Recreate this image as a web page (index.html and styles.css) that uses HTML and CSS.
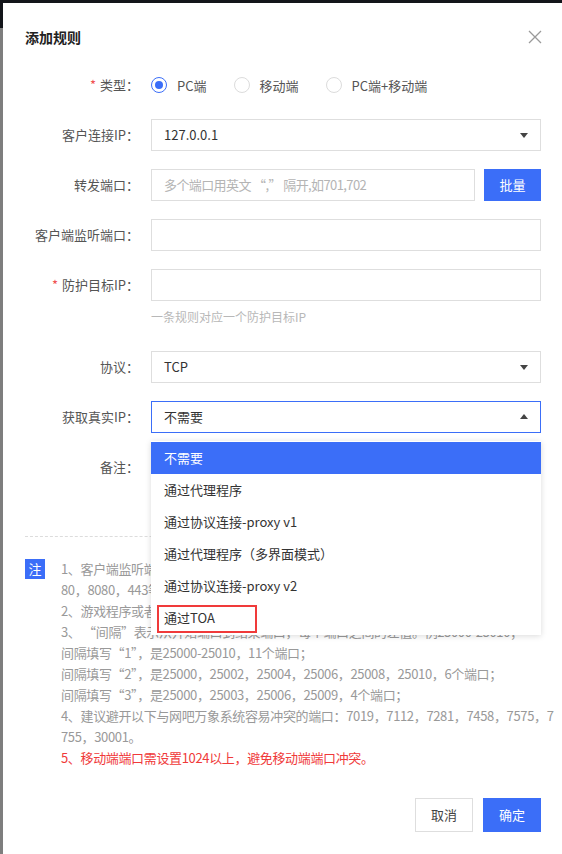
FILE: index.html
```html
<!DOCTYPE html>
<html lang="zh-CN">
<head>
<meta charset="utf-8">
<title>添加规则</title>
<link rel="stylesheet" href="styles.css">
</head>
<body>
<div class="modal">
  <div class="modal-header">
    <div class="modal-title">添加规则</div>
    <svg class="close" width="14" height="14" viewBox="0 0 14 14"><path d="M1 1 L13 13 M13 1 L1 13" stroke="#9a9a9a" stroke-width="1.3" fill="none"/></svg>
  </div>
  <div class="form">
    <div class="row">
      <div class="label"><span class="req">*</span>类型：</div>
      <div class="control radios">
        <label class="radio"><span class="dot checked"></span>PC端</label>
        <label class="radio"><span class="dot"></span>移动端</label>
        <label class="radio"><span class="dot"></span>PC端+移动端</label>
      </div>
    </div>
    <div class="row">
      <div class="label">客户连接IP：</div>
      <div class="control"><div class="input select">127.0.0.1<span class="caret down"></span></div></div>
    </div>
    <div class="row">
      <div class="label">转发端口：</div>
      <div class="control split">
        <div class="input placeholder">多个端口用英文 “,” 隔开,如701,702</div>
        <div class="btn primary">批量</div>
      </div>
    </div>
    <div class="row">
      <div class="label">客户端监听端口：</div>
      <div class="control"><div class="input"></div></div>
    </div>
    <div class="row hint-row">
      <div class="label"><span class="req">*</span>防护目标IP：</div>
      <div class="control">
        <div class="input"></div>
        <div class="hint">一条规则对应一个防护目标IP</div>
      </div>
    </div>
    <div class="row">
      <div class="label">协议：</div>
      <div class="control"><div class="input select">TCP<span class="caret down"></span></div></div>
    </div>
    <div class="row">
      <div class="label">获取真实IP：</div>
      <div class="control dd-wrap">
        <div class="input select focus">不需要<span class="caret up"></span></div>
        <ul class="dropdown">
          <li class="active">不需要</li>
          <li>通过代理程序</li>
          <li>通过协议连接-proxy v1</li>
          <li>通过代理程序（多界面模式）</li>
          <li>通过协议连接-proxy v2</li>
          <li class="marked">通过TOA<span class="redbox"></span></li>
        </ul>
      </div>
    </div>
    <div class="row">
      <div class="label">备注：</div>
      <div class="control"><div class="textarea"></div></div>
    </div>
  </div>
  <div class="divider"></div>
  <div class="notes">
    <div class="badge">注</div>
    <div class="note-text">
      <p>1、客户端监听端口为空时默认与转发端口一致，请避免使用</p>
      <p>80，8080，443等常用端口；</p>
      <p>2、游戏程序或者登录器需连接客户连接IP和客户端监听端口；</p>
      <p>3、 “间隔”表示从开始端口到结束端口，每个端口之间的差值。例25000-25010；</p>
      <p>间隔填写“1”，是25000-25010，11个端口；</p>
      <p>间隔填写“2”，是25000，25002，25004，25006，25008，25010，6个端口；</p>
      <p>间隔填写“3”，是25000，25003，25006，25009，4个端口；</p>
      <p>4、建议避开以下与网吧万象系统容易冲突的端口：7019，7112，7281，7458，7575，7<br>755，30001。</p>
      <p class="red">5、移动端端口需设置1024以上，避免移动端端口冲突。</p>
    </div>
  </div>
  <div class="footer">
    <div class="btn default">取消</div>
    <div class="btn primary">确定</div>
  </div>
</div>
</body>
</html>
```
FILE: styles.css
```css
* { box-sizing: border-box; }
html, body { margin: 0; padding: 0; }
body {
  width: 562px;
  height: 854px;
  overflow: hidden;
  background-color: #13151a;
  background-image: linear-gradient(to bottom, #13151a 0, #13151a 28px, #7e7e7e 28px, #7e7e7e 100%);
  background-size: 3px 100%;
  background-repeat: no-repeat;
  font-family: "Microsoft YaHei", "Noto Sans CJK SC", sans-serif;
  font-size: 13px;
  color: #333;
}
.modal {
  margin: 3px 0 0 3px;
  height: 851px;
  background: #fff;
  position: relative;
}
.modal-header {
  display: flex;
  justify-content: space-between;
  align-items: center;
  padding: 24px 20px 0 22px;
  height: 44px;
}
.modal-title {
  font-size: 14px;
  font-weight: bold;
  color: #222;
  line-height: 20px;
}
.close { display: block; margin-top: 0; }

.form {
  display: flex;
  flex-direction: column;
  gap: 18px;
  padding: 22px 21px 0 0;
}
.row {
  display: flex;
  align-items: flex-start;
}
.label {
  width: 136px;
  margin-right: 12px;
  text-align: right;
  line-height: 32px;
  color: #555;
  white-space: nowrap;
}
.req { color: #f0504f; margin-right: 4px; }
.control { flex: 1; }
.radios {
  display: flex;
  align-items: center;
  height: 32px;
  gap: 27px;
}
.radio {
  display: flex;
  align-items: center;
  gap: 10px;
  color: #555;
}
.dot {
  width: 16px;
  height: 16px;
  border-radius: 50%;
  border: 1px solid #dcdcdc;
  display: inline-block;
  position: relative;
}
.dot.checked { border-color: #3b6ef8; }
.dot.checked::after {
  content: "";
  position: absolute;
  left: 3px; top: 3px;
  width: 8px; height: 8px;
  border-radius: 50%;
  background: #3b6ef8;
}
.input {
  height: 32px;
  border: 1px solid #dedede;
  padding: 0 12px;
  line-height: 30px;
  color: #333;
  position: relative;
  background: #fff;
}
.input.placeholder { color: #b4b4b4; letter-spacing: -0.6px; }
.input.focus { border-color: #3b6ef8; }
.caret {
  position: absolute;
  right: 12px;
  top: 13px;
  width: 0; height: 0;
  border-left: 4px solid transparent;
  border-right: 4px solid transparent;
}
.caret.down { border-top: 5px solid #444; }
.caret.up { border-bottom: 5px solid #444; top: 12px; }
.split { display: flex; gap: 9px; }
.split .input { flex: 1; }
.btn {
  height: 32px;
  width: 57px;
  line-height: 32px;
  text-align: center;
  font-size: 13px;
}
.btn.primary { background: #3b6ef8; color: #fff; }
.btn.default { border: 1px solid #dedede; color: #444; line-height: 30px; }
.hint {
  margin-top: 8px;
  line-height: 16px;
  font-size: 12px;
  color: #b8b8b8;
}
.hint-row { margin-bottom: 8px; }
.textarea { height: 70px; }

.dd-wrap { position: relative; }
.dropdown {
  position: absolute;
  left: 0; right: 0;
  top: 40px;
  margin: 0;
  padding: 1px 0;
  list-style: none;
  background: #fff;
  box-shadow: 0 1px 6px rgba(0,0,0,0.15);
  z-index: 10;
}
.dropdown li {
  height: 32px;
  line-height: 32px;
  padding: 0 13px;
  color: #333;
  position: relative;
}
.dropdown li.active { background: #3b6ef8; color: #fff; }
.redbox {
  position: absolute;
  left: 6px; top: 3px;
  width: 100px; height: 28px;
  border: 2px solid #f03a3a;
}

.divider {
  margin: 15px 21px 0 22px;
  border-top: 1px dashed #dcdcdc;
}
.notes {
  display: flex;
  padding: 21px 21px 0 22px;
  gap: 16px;
}
.badge {
  width: 20px; height: 20px;
  flex: none;
  margin-top: 1px;
  background: #3b6ef8;
  color: #fff;
  text-align: center;
  line-height: 20px;
  font-size: 13px;
}
.note-text {
  flex: 1;
  color: #999;
  font-size: 13px;
  line-height: 21px;
  letter-spacing: -0.35px;
  white-space: nowrap;
}
.note-text p { margin: 0; }
.note-text .red { color: #f03a3a; }
.footer {
  display: flex;
  justify-content: flex-end;
  gap: 10px;
  padding: 30px 21px 0 0;
}
.footer .btn { height: 34px; width: 58px; line-height: 34px; }
.footer .btn.default { line-height: 32px; }
```
